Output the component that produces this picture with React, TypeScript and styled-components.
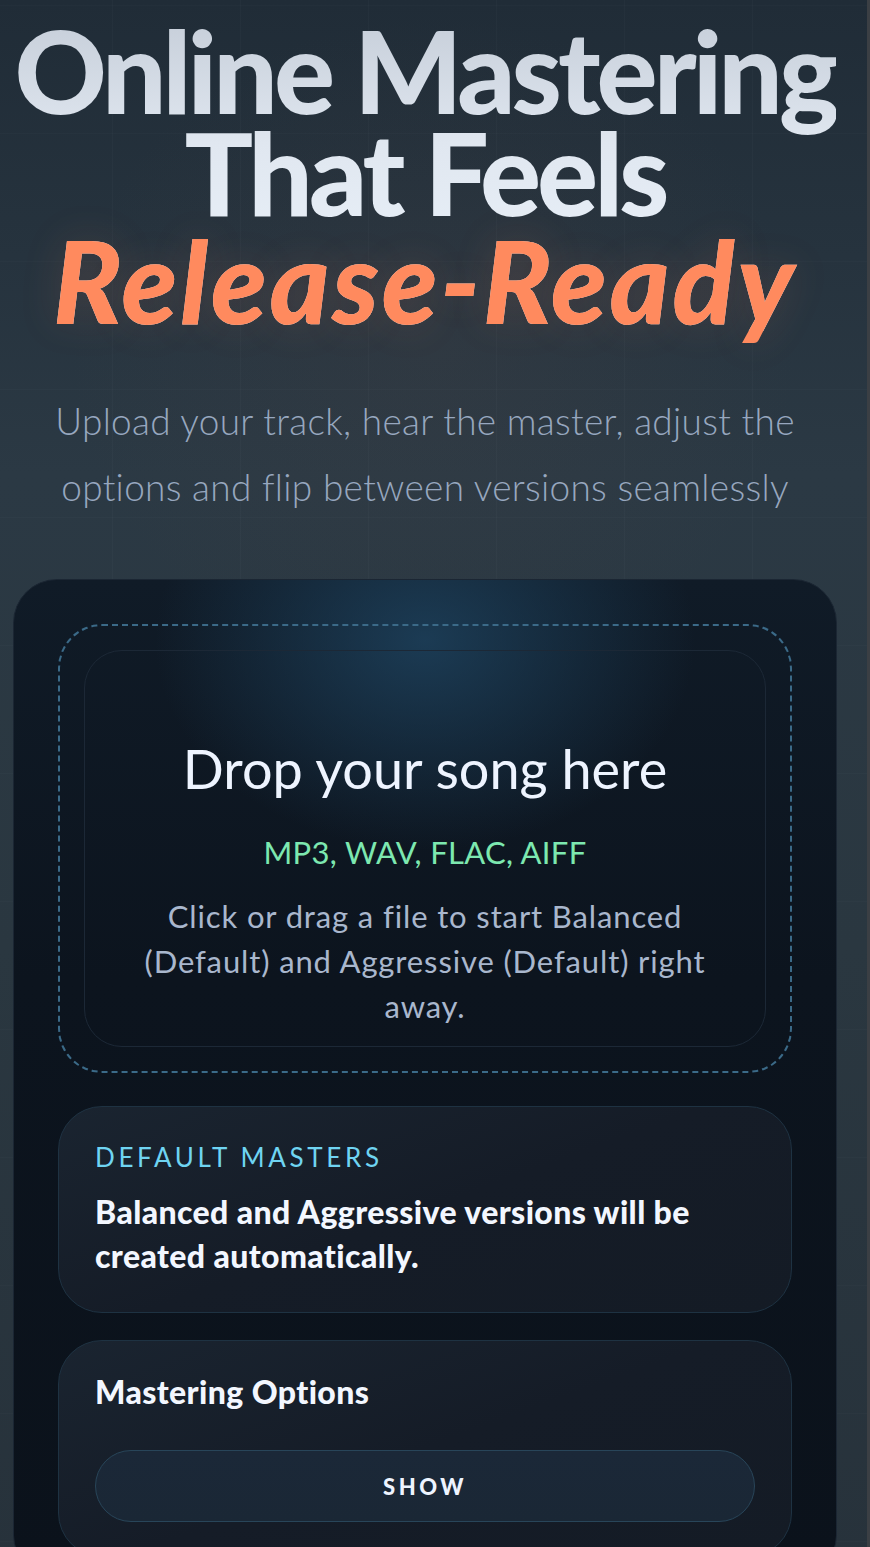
import React from "react";
import styled, { createGlobalStyle } from "styled-components";

const Global = createGlobalStyle`
  html, body { margin: 0; padding: 0; background: #26323d; }
  body { font-family: Lato, "Open Sans", sans-serif; -webkit-font-smoothing: antialiased; }
  * { box-sizing: border-box; }
`;

const Page = styled.div`
  min-height: 1547px;
  width: 870px;
  padding: 0 30px 0 13px;
  border-right: 3px solid #3b3f44;
  background:
    linear-gradient(90deg, rgba(255,255,255,0.018) 1px, transparent 1px) 112px 0 / 128px 128px,
    linear-gradient(0deg, rgba(255,255,255,0.014) 1px, transparent 1px) 0 6px / 128px 128px,
    radial-gradient(ellipse 60% 30% at 50% 22%, rgba(80, 70, 70, 0.18), transparent 70%),
    linear-gradient(180deg, #202c37 0%, #2b3944 30%, #2a3740 60%, #27323b 100%);
  overflow: hidden;
`;

const Hero = styled.header`
  display: flex;
  flex-direction: column;
  align-items: center;
  padding-top: 19px;
`;

const Title = styled.h1`
  margin: 0;
  font-family: Lato, sans-serif;
  font-weight: 900;
  font-size: 114px;
  line-height: 102px;
  letter-spacing: -0.035em;
  text-align: center;
  white-space: nowrap;
  background: linear-gradient(180deg, #c7cfda 0%, #e0e7f0 40%, #edf5fd 100%);
  -webkit-background-clip: text;
  background-clip: text;
  color: transparent;
`;

const TitleLine = styled.span`
  display: block;
`;

const Accent = styled.span`
  display: block;
  font-style: italic;
  letter-spacing: 0.025em;
  color: #ff8a5e;
  -webkit-text-fill-color: #ff8a5e;
  text-shadow: 0 0 40px rgba(255, 138, 94, 0.15);
  margin-top: 6px;
`;

const Subtitle = styled.p`
  margin: 57px 0 0;
  font-family: Lato, sans-serif;
  font-weight: 300;
  font-size: 37px;
  line-height: 66px;
  letter-spacing: 0.008em;
  color: #97a7bf;
  text-align: center;
  max-width: 800px;
`;

const Card = styled.section`
  margin-top: 59px;
  border-radius: 44px;
  border: 1px solid #1b2633;
  background:
    radial-gradient(ellipse 360px 280px at 50% 60px, rgba(32, 72, 102, 0.72), transparent 75%),
    linear-gradient(180deg, #101b27 0%, #0c141e 40%, #0b121b 100%);
  padding: 44px 44px 0;
  display: flex;
  flex-direction: column;
  gap: 27px;
  min-height: 1000px;
`;

const DropZone = styled.div`
  border: 2px dashed #3b6a88;
  border-radius: 44px;
  padding: 24px;
  margin-bottom: 6px;
`;

const DropInner = styled.div`
  border: 1.5px solid #1c2836;
  border-radius: 38px;
  min-height: 397px;
  display: flex;
  flex-direction: column;
  align-items: center;
  justify-content: flex-start;
  text-align: center;
  padding: 86px 40px 16px;
`;

const DropTitle = styled.h2`
  margin: 0;
  font-family: Lato, sans-serif;
  font-weight: 400;
  font-size: 54px;
  line-height: 64px;
  letter-spacing: 0;
  color: #eef4ff;
`;

const Formats = styled.div`
  margin-top: 31px;
  font-size: 31px;
  line-height: 40px;
  letter-spacing: 0.01em;
  color: #7de8b0;
`;

const DropHint = styled.p`
  margin: 22px 0 0;
  font-size: 31px;
  line-height: 45px;
  font-weight: 400;
  letter-spacing: 0.028em;
  color: #a9b7cd;
`;

const Panel = styled.div<{ $top: number }>`
  border: 1.5px solid #1e3242;
  border-radius: 44px;
  background: linear-gradient(160deg, #1a2430 0%, #151c27 50%, #141b25 100%);
  padding: ${(p) => p.$top}px 36px 34px;
  display: flex;
  flex-direction: column;
`;

const Eyebrow = styled.div`
  font-size: 26px;
  line-height: 32px;
  letter-spacing: 0.14em;
  color: #6fd4f2;
  font-weight: 400;
`;

const PanelText = styled.p`
  margin: 17px 0 0;
  font-size: 32px;
  line-height: 44px;
  font-weight: 900;
  letter-spacing: 0.012em;
  color: #f3f7ff;
`;

const PanelTitle = styled.h3`
  margin: 0;
  font-size: 32px;
  line-height: 44px;
  font-weight: 900;
  letter-spacing: 0.012em;
  color: #f3f7ff;
`;

const ShowButton = styled.button`
  margin-top: 36px;
  height: 72px;
  border-radius: 36px;
  border: 1.5px solid #284559;
  background: linear-gradient(180deg, #1b2838 0%, #1a2735 100%);
  color: #eef4ff;
  font-family: Lato, sans-serif;
  font-size: 22px;
  font-weight: 900;
  letter-spacing: 0.16em;
  cursor: pointer;
`;

export default function App() {
  return (
    <>
      <Global />
      <Page>
        <Hero>
          <Title>
            <TitleLine>Online Mastering</TitleLine>
            <TitleLine>That Feels</TitleLine>
            <Accent>Release-Ready</Accent>
          </Title>
          <Subtitle>
            Upload your track, hear the master, adjust the options and flip
            between versions seamlessly
          </Subtitle>
        </Hero>
        <Card>
          <DropZone>
            <DropInner>
              <DropTitle>Drop your song here</DropTitle>
              <Formats>MP3, WAV, FLAC, AIFF</Formats>
              <DropHint>
                Click or drag a file to start Balanced (Default) and Aggressive
                (Default) right away.
              </DropHint>
            </DropInner>
          </DropZone>
          <Panel $top={34}>
            <Eyebrow>DEFAULT MASTERS</Eyebrow>
            <PanelText>
              Balanced and Aggressive versions will be created automatically.
            </PanelText>
          </Panel>
          <Panel $top={29}>
            <PanelTitle>Mastering Options</PanelTitle>
            <ShowButton>SHOW</ShowButton>
          </Panel>
        </Card>
      </Page>
    </>
  );
}
